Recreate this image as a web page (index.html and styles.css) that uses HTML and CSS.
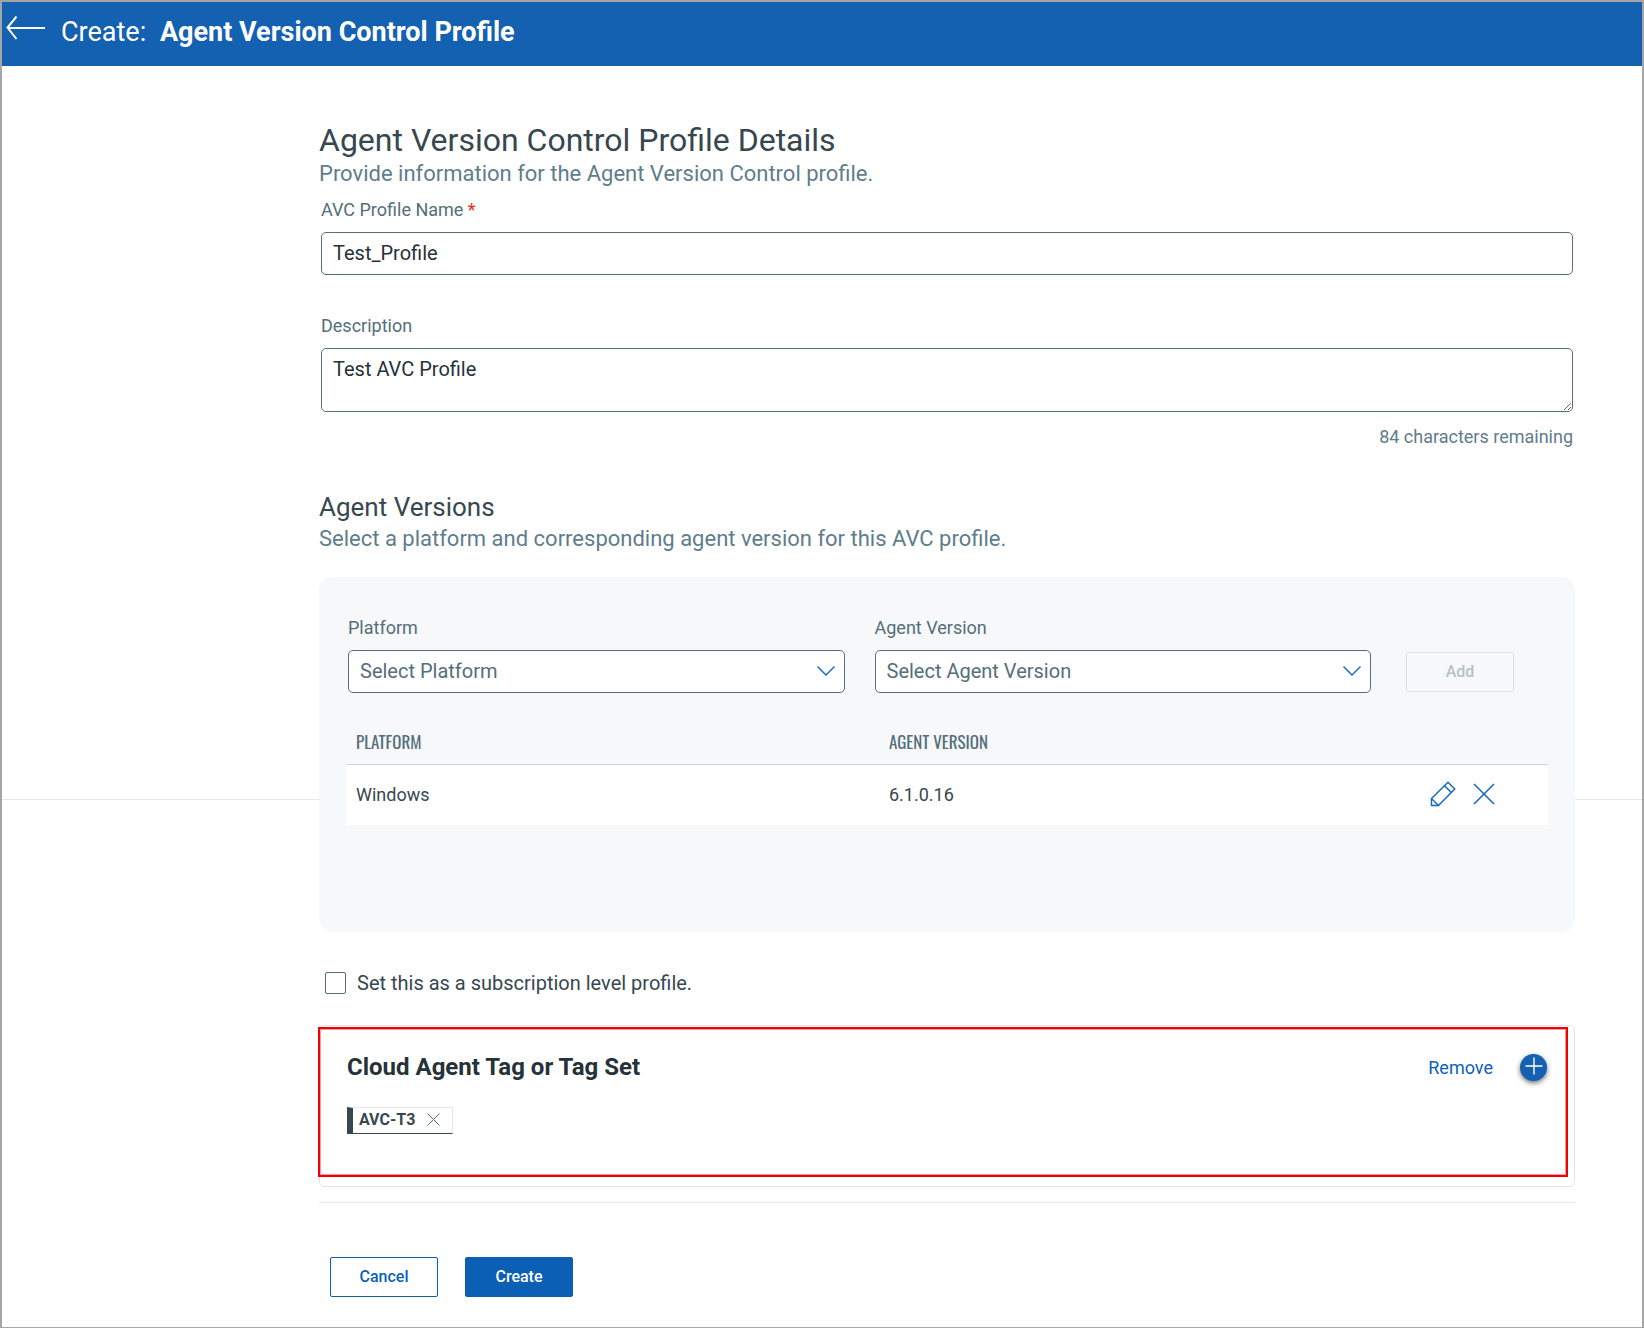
FILE: index.html
```html
<!DOCTYPE html>
<html lang="en">

<head>
    <meta charset="UTF-8">
    <meta name="viewport" content="width=device-width, initial-scale=1.0">
    <title>Create: Agent Version Control Profile</title>
    <link rel="stylesheet" href="styles.css">
</head>

<body>
    <div class="page">
        <header class="topbar">
            <a class="back" href="#" aria-label="Back">
                <svg width="39" height="24" viewBox="0 0 39 24" fill="none" stroke="currentColor" stroke-width="2">
                    <path d="M10.5 0.5L1.5 11.5L10.5 23M1.5 12H39" />
                </svg>
            </a>
            <p class="topbar-title">Create: <strong>Agent Version Control Profile</strong></p>
        </header>

        <main class="content">
            <form class="profile-form">
                <h1>Agent Version Control Profile Details</h1>
                <p class="subtitle">Provide information for the Agent Version Control profile.</p>

                <div class="field">
                    <label for="name">AVC Profile Name <span class="required">*</span></label>
                    <input class="control" type="text" id="name" name="name" value="Test_Profile" required>
                </div>

                <div class="field">
                    <label for="description">Description</label>
                    <textarea class="control" id="description" name="description">Test AVC Profile</textarea>
                    <p class="remaining">84 characters remaining</p>
                </div>

                <h2>Agent Versions</h2>
                <p class="subtitle">Select a platform and corresponding agent version for this AVC profile.</p>

                <section class="panel">
                    <div class="picker">
                        <div class="picker-field">
                            <label for="platform">Platform</label>
                            <div class="select">
                                <select class="control" id="platform" name="platform">
                                    <option>Select Platform</option>
                                </select>
                                <svg class="chevron" width="18" height="10" viewBox="0 0 18 10" fill="none" stroke="currentColor" stroke-width="1.4">
                                    <path d="M0.5 0.5L9 9L17.5 0.5" />
                                </svg>
                            </div>
                        </div>
                        <div class="picker-field">
                            <label for="version">Agent Version</label>
                            <div class="select">
                                <select class="control" id="version" name="version">
                                    <option>Select Agent Version</option>
                                </select>
                                <svg class="chevron" width="18" height="10" viewBox="0 0 18 10" fill="none" stroke="currentColor" stroke-width="1.4">
                                    <path d="M0.5 0.5L9 9L17.5 0.5" />
                                </svg>
                            </div>
                        </div>
                        <button class="btn btn-add" type="button" disabled>Add</button>
                    </div>

                    <table class="versions">
                        <thead>
                            <tr>
                                <th class="col-platform">Platform</th>
                                <th>Agent Version</th>
                                <th class="col-actions"></th>
                            </tr>
                        </thead>
                        <tbody>
                            <tr>
                                <td>Windows</td>
                                <td>6.1.0.16</td>
                                <td>
                                    <div class="actions">
                                        <button class="icon-btn" type="button" aria-label="Edit">
                                            <svg width="26" height="26" viewBox="0 0 26 26" fill="none" stroke="currentColor" stroke-width="1.4" stroke-linejoin="round">
                                                <path d="M1.5 17.5L18 1.2L24.8 8L8.5 24.5H1.5ZM14.5 4.7L21.3 11.5M1.5 17.5L8.5 24.5" />
                                            </svg>
                                        </button>
                                        <button class="icon-btn" type="button" aria-label="Delete">
                                            <svg width="22" height="22" viewBox="0 0 22 22" fill="none" stroke="currentColor" stroke-width="1.5">
                                                <path d="M1 1L21 21M21 1L1 21" />
                                            </svg>
                                        </button>
                                    </div>
                                </td>
                            </tr>
                        </tbody>
                    </table>
                </section>

                <div class="check">
                    <input type="checkbox" id="subscription" name="subscription">
                    <label for="subscription">Set this as a subscription level profile.</label>
                </div>

                <section class="card">
                    <div class="card-head">
                        <h3>Cloud Agent Tag or Tag Set</h3>
                        <a class="remove" href="#">Remove</a>
                        <button class="add-tag" type="button" aria-label="Add tag">
                            <svg width="18" height="18" viewBox="0 0 18 18" fill="none" stroke="currentColor" stroke-width="1.4">
                                <path d="M9 0.5V17.5M0.5 9H17.5" />
                            </svg>
                        </button>
                    </div>
                    <div class="tag">
                        <span>AVC-T3</span>
                        <button class="tag-remove" type="button" aria-label="Remove AVC-T3">
                            <svg width="13" height="13" viewBox="0 0 13 13" fill="none" stroke="currentColor">
                                <path d="M0.5 0.5L12.5 12.5M12.5 0.5L0.5 12.5" />
                            </svg>
                        </button>
                    </div>
                    <div class="highlight"></div>
                </section>

                <div class="form-actions">
                    <button class="btn btn-cancel" type="button">Cancel</button>
                    <button class="btn btn-create" type="submit">Create</button>
                </div>
            </form>
        </main>
    </div>
</body>

</html>
```

FILE: styles.css
```css
* {
    box-sizing: border-box;
}

body {
    margin: 0;
    font-family: Roboto, sans-serif;
    font-size: 18px;
    color: #37474f;
}

h1,
h2,
h3,
p {
    margin: 0;
    font-weight: 400;
}

.page {
    min-height: 100vh;
    border: 2px solid #a5a5a5;
    background: linear-gradient(#e6e8ea, #e6e8ea) 0 797px / 100% 1px no-repeat #fff;
}

.topbar {
    display: flex;
    align-items: center;
    gap: 16px;
    height: 64px;
    padding: 0 4px 4px;
    color: #fff;
    background-color: #1461b1;
}

.back {
    height: 32px;
    color: #fff;
}

.topbar-title {
    font-size: 27px;
    line-height: 32px;
}

.topbar-title strong {
    margin-left: 7px;
}

.content {
    padding: 56px 67px 30px 317px;
}

h1 {
    margin-bottom: 4px;
    font-size: 32px;
    line-height: 36px;
}

h2 {
    margin: 40px 0 2px;
    font-size: 26px;
    line-height: 36px;
}

.subtitle {
    font-size: 22px;
    line-height: 24px;
    color: #607d8b;
}

.field {
    margin: 0 2px;
}

.field label,
.picker label {
    display: block;
    height: 46px;
    padding-top: 12px;
    line-height: 24px;
    color: #546e7a;
}

.field + .field {
    margin-top: 27px;
}

.required {
    color: #f02a12;
}

.control {
    display: block;
    width: 100%;
    height: 43px;
    padding: 0 11px 1px;
    font-family: inherit;
    font-size: 20px;
    color: #263238;
    background-color: #fff;
    border: 1px solid #546e7a;
    border-radius: 5px;
}

textarea.control {
    height: 64px;
    padding-top: 8px;
    line-height: 24px;
}

.remaining {
    margin-top: 13px;
    line-height: 24px;
    text-align: right;
    color: #607d8b;
}

.panel {
    min-height: 355px;
    margin-top: 26px;
    padding: 27px;
    background-color: #f6f8fa;
    border-radius: 14px;
}

.picker {
    display: flex;
    align-items: flex-end;
    gap: 30px;
    padding: 0 34px 0 2px;
}

.picker-field {
    flex: 1;
}

.select {
    position: relative;
}

.select .control {
    appearance: none;
    color: #546e7a;
}

.chevron {
    position: absolute;
    top: 16px;
    right: 10px;
    color: #0d66c2;
    pointer-events: none;
}

.btn {
    width: 108px;
    height: 40px;
    padding-bottom: 2px;
    font-family: inherit;
    font-size: 16px;
    font-weight: 500;
    border: 1px solid #0b5fb5;
    border-radius: 2px;
    cursor: pointer;
}

.btn-add {
    margin: 0 0 1px 5px;
    color: #b4c2c9;
    background-color: transparent;
    border-color: #dfe4e7;
}

.versions {
    width: 100%;
    margin-top: 28px;
    border-collapse: collapse;
}

.versions th {
    height: 43px;
    padding: 0 10px 1px;
    font-family: Oswald, "Roboto Condensed", Roboto, sans-serif;
    font-size: 17px;
    font-weight: 400;
    text-align: left;
    text-transform: uppercase;
    color: #546e7a;
    border-bottom: 1px solid #cfd6da;
}

.versions td {
    height: 61px;
    padding: 0 10px 1px;
    background-color: #fff;
}

.col-platform {
    width: 533px;
}

.col-actions {
    width: 128px;
}

.actions {
    display: flex;
    align-items: center;
    gap: 17px;
}

.icon-btn,
.tag-remove {
    display: flex;
    padding: 0;
    color: #0d66c2;
    background: none;
    border: none;
    cursor: pointer;
}

.check {
    display: flex;
    align-items: center;
    gap: 11px;
    margin: 39px 6px 30px;
    font-size: 20px;
    line-height: 24px;
}

.check input {
    appearance: none;
    width: 21px;
    height: 22px;
    margin: 0;
    background-color: #fff;
    border: 1px solid #546e7a;
    border-radius: 2px;
}

.card {
    position: relative;
    height: 162px;
    padding: 27px 27px 0;
    border: 1px solid #dfe4e8;
    border-radius: 5px;
}

.card-head {
    display: flex;
    align-items: center;
    gap: 27px;
}

h3 {
    flex: 1;
    font-size: 24px;
    font-weight: 700;
    line-height: 28px;
    color: #263238;
}

.remove {
    color: #0d5fb8;
    text-decoration: none;
}

.add-tag {
    display: flex;
    align-items: center;
    justify-content: center;
    width: 27px;
    height: 27px;
    padding: 0 0 2px;
    color: #fff;
    background-color: #1461b1;
    border: none;
    border-radius: 50%;
    box-shadow: 0 2px 5px rgba(38, 50, 56, 0.7);
    cursor: pointer;
}

.tag {
    display: inline-flex;
    align-items: center;
    gap: 12px;
    height: 27px;
    margin-top: 26px;
    padding: 0 12px 2px 6px;
    font-size: 16px;
    font-weight: 700;
    border: 1px solid #e4e8ea;
    border-bottom-color: #37474f;
    border-left: 6px solid #37474f;
}

.tag-remove {
    color: #546e7a;
}

/* outline round the tag section */
.highlight {
    position: absolute;
    inset: 1px 6px 9px -2px;
    border: 2px solid #f00000;
    box-shadow: inset 0 0 0 1px rgba(240, 0, 0, 0.4);
    pointer-events: none;
}

.form-actions {
    display: flex;
    gap: 27px;
    margin-top: 15px;
    padding: 54px 11px 0;
    border-top: 1px solid #e4e8ea;
}

.btn-cancel {
    color: #0b5fb5;
    background-color: #fff;
}

.btn-create {
    color: #fff;
    background-color: #0b5fb5;
}
```
